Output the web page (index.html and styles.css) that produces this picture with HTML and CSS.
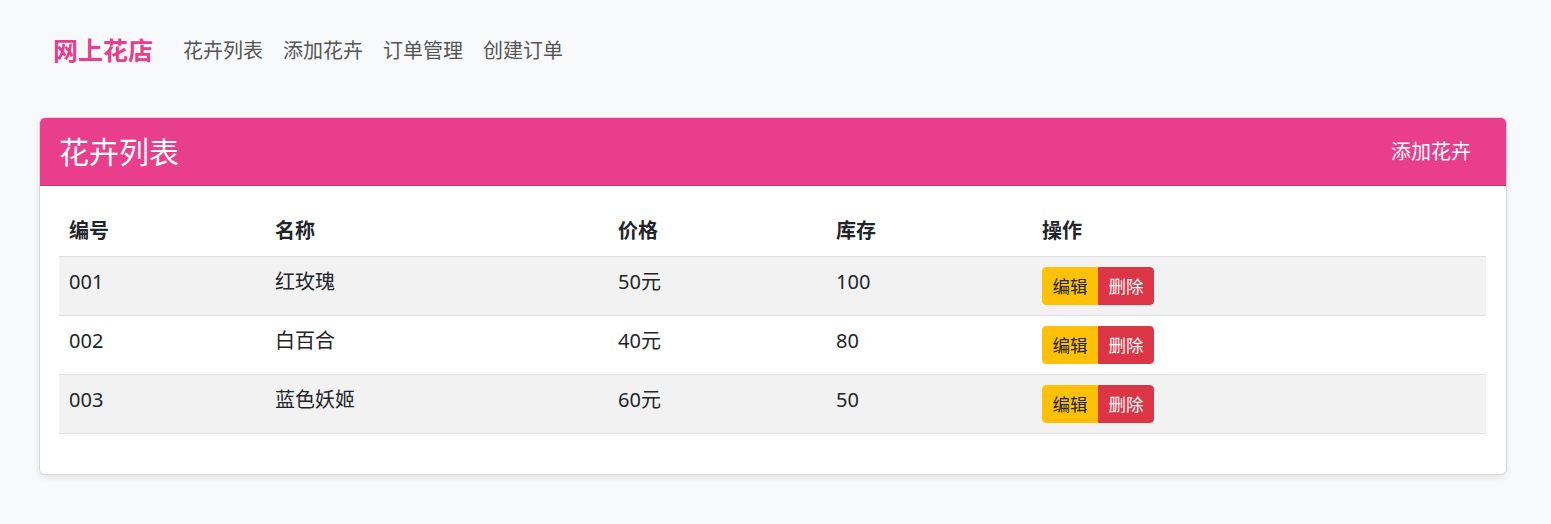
FILE: index.html
```html
<!DOCTYPE html>
<html lang="zh">
<head>
<meta charset="utf-8">
<title>网上花店</title>
<link rel="stylesheet" href="styles.css">
</head>
<body>
<nav class="navbar">
  <a class="brand" href="#">网上花店</a>
  <ul class="nav-links">
    <li><a href="#">花卉列表</a></li>
    <li><a href="#">添加花卉</a></li>
    <li><a href="#">订单管理</a></li>
    <li><a href="#">创建订单</a></li>
  </ul>
</nav>
<main class="main">
  <section class="card">
    <header class="card-header">
      <h4 class="card-title">花卉列表</h4>
      <a class="btn-add" href="#">添加花卉</a>
    </header>
    <div class="card-body">
      <table class="table">
        <colgroup>
          <col class="c1"><col class="c2"><col class="c3"><col class="c4"><col class="c5">
        </colgroup>
        <thead>
          <tr><th>编号</th><th>名称</th><th>价格</th><th>库存</th><th>操作</th></tr>
        </thead>
        <tbody>
          <tr class="odd"><td>001</td><td>红玫瑰</td><td>50元</td><td>100</td>
            <td><div class="btn-group"><button class="btn btn-edit">编辑</button><button class="btn btn-del">删除</button></div></td></tr>
          <tr><td>002</td><td>白百合</td><td>40元</td><td>80</td>
            <td><div class="btn-group"><button class="btn btn-edit">编辑</button><button class="btn btn-del">删除</button></div></td></tr>
          <tr class="odd"><td>003</td><td>蓝色妖姬</td><td>60元</td><td>50</td>
            <td><div class="btn-group"><button class="btn btn-edit">编辑</button><button class="btn btn-del">删除</button></div></td></tr>
        </tbody>
      </table>
    </div>
  </section>
</main>
</body>
</html>
```
FILE: styles.css
```css
* { box-sizing: border-box; }
html, body { margin: 0; padding: 0; }
body {
  background: #f8f9fa;
  font-family: "Noto Sans", "Noto Sans CJK SC", sans-serif;
  font-size: 20px;
  line-height: 1.5;
  color: #212529;
}
a { text-decoration: none; }

.navbar {
  display: flex;
  align-items: center;
  height: 101px;
  padding: 0 0 0 53px;
}
.brand {
  font-size: 25px;
  font-weight: 700;
  color: #e83e8c;
  margin-right: 20px;
}
.nav-links {
  display: flex;
  list-style: none;
  margin: 0;
  padding: 0;
}
.nav-links a {
  display: block;
  padding: 0 10px;
  font-size: 20px;
  color: #555;
}

.main {
  padding: 16px 44px 50px 39px;
}
.card {
  background: #fff;
  border: 1px solid rgba(0,0,0,.15);
  border-radius: 6px;
  box-shadow: 0 3px 6px rgba(0,0,0,.08);
  overflow: hidden;
}
.card-header {
  display: flex;
  align-items: center;
  justify-content: space-between;
  background: #e83e8c;
  height: 68px;
  padding: 0 20px 0 19px;
  border-bottom: 1px solid rgba(0,0,0,.15);
}
.card-title {
  margin: 0;
  font-size: 30px;
  font-weight: 400;
  line-height: 1.2;
  color: #fff;
}
.btn-add {
  color: #fff;
  font-size: 20px;
  padding: 7px 15px;
  line-height: 1.5;
}
.card-body {
  padding: 20px 20px 40px 19px;
}
.table {
  width: 100%;
  border-collapse: collapse;
}
.c1 { width: 206px; }
.c2 { width: 343px; }
.c3 { width: 218px; }
.c4 { width: 206px; }
.table th, .table td {
  text-align: left;
  vertical-align: top;
  padding: 10px;
  line-height: 30px;
}
.table th {
  font-weight: 700;
  border-bottom: 1px solid #dee2e6;
}
.table td {
  border-bottom: 1px solid #dee2e6;
}
.table tr.odd td { background: #f2f2f2; }
.btn-group { display: flex; }
.btn {
  font-family: inherit;
  font-size: 17.5px;
  line-height: 26px;
  padding: 5px 9.5px;
  border: 1px solid transparent;
  cursor: pointer;
}
.btn-edit {
  background: #ffc107;
  border-color: #ffc107;
  color: #212529;
  border-radius: 4px 0 0 4px;
}
.btn-del {
  background: #dc3545;
  border-color: #dc3545;
  color: #fff;
  border-radius: 0 4px 4px 0;
}
```
